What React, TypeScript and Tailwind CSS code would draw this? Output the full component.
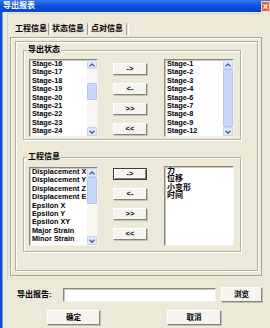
import React from "react";

function Arrow({ up }: { up?: boolean }) {
  return (
    <div className="h-[9px] w-[10px] flex items-center justify-center bg-[#dfe8fb] border border-[#c3d3f5] rounded-[1px]">
      <svg width="6" height="4" viewBox="0 0 6 4">
        {up ? (
          <path d="M0.5 3.5 L3 1 L5.5 3.5" fill="none" stroke="#4d6185" strokeWidth="1.3" />
        ) : (
          <path d="M0.5 0.8 L3 3.3 L5.5 0.8" fill="none" stroke="#4d6185" strokeWidth="1.3" />
        )}
      </svg>
    </div>
  );
}

function ScrollBar({ top, thumb }: { top: number; thumb: number }) {
  return (
    <div className="w-[10px] h-full flex flex-col bg-[#f7f6f1]">
      <Arrow up />
      <div className="flex-1 flex flex-col">
        <div style={{ height: top }} />
        <div
          className="w-[10px] bg-[#c7d7fb] border border-[#b4c7f2] rounded-[1px]"
          style={{ height: thumb }}
        />
      </div>
      <Arrow />
    </div>
  );
}

function ListBox({
  items,
  w,
  h,
  cjk,
  bar,
  className = "",
}: {
  items: string[];
  w: string;
  h: string;
  cjk?: boolean;
  bar?: { top: number; thumb: number };
  className?: string;
}) {
  return (
    <div
      className={`${w} ${h} ${className} bg-white flex border border-t-[#8a887d] border-l-[#8a887d] border-r-[#f4f3ee] border-b-[#f4f3ee] shadow-[inset_1px_1px_0_#c9c6b8]`}
    >
      <div className="flex-1 flex flex-col pl-[2px] overflow-hidden">
        {items.map((t) => (
          <div
            key={t}
            className={
              cjk
                ? "text-[8px] leading-[8.4px] font-bold text-black whitespace-nowrap"
                : "text-[7.3px] leading-[8.4px] font-bold text-black whitespace-nowrap"
            }
          >
            {t}
          </div>
        ))}
      </div>
      {bar && <ScrollBar top={bar.top} thumb={bar.thumb} />}
    </div>
  );
}

function Btn({
  label,
  w,
  h,
  focused,
}: {
  label: string;
  w: string;
  h: string;
  focused?: boolean;
}) {
  return (
    <div
      className={`${w} ${h} flex items-center justify-center bg-[#f5f4ef] text-[7.5px] font-bold text-black leading-none border ${
        focused
          ? "border-[#3c3b36] shadow-[inset_1px_1px_0_#fff,inset_-1px_-1px_0_#85837a]"
          : "border-t-white border-l-white border-r-[#85837a] border-b-[#85837a] shadow-[1px_1px_0_#c3c0b2]"
      }`}
    >
      {label}
    </div>
  );
}

function Buttons({ focusFirst }: { focusFirst?: boolean }) {
  return (
    <div className="flex flex-col gap-[8px]">
      <Btn label="->" w="w-[34px]" h="h-[12px]" focused={focusFirst} />
      <Btn label="<-" w="w-[34px]" h="h-[12px]" />
      <Btn label=">>" w="w-[34px]" h="h-[12px]" />
      <Btn label="<<" w="w-[34px]" h="h-[12px]" />
    </div>
  );
}

function GroupBox({
  title,
  h,
  className = "",
  children,
}: {
  title: string;
  h: string;
  className?: string;
  children: React.ReactNode;
}) {
  return (
    <div
      className={`relative w-[218px] ${h} ${className} border border-[#b7b4a5] shadow-[inset_1px_1px_0_#fff,1px_1px_0_#fff]`}
    >
      <span className="absolute left-[3px] top-[-6px] px-[1px] bg-[#ece9d8] text-[8px] leading-[10px] font-bold text-black">
        {title}
      </span>
      {children}
    </div>
  );
}

export default function App() {
  const left1 = [
    "Stage-16",
    "Stage-17",
    "Stage-18",
    "Stage-19",
    "Stage-20",
    "Stage-21",
    "Stage-22",
    "Stage-23",
    "Stage-24",
  ];
  const right1 = [
    "Stage-1",
    "Stage-2",
    "Stage-3",
    "Stage-4",
    "Stage-6",
    "Stage-7",
    "Stage-8",
    "Stage-9",
    "Stage-12",
  ];
  const left2 = [
    "Displacement X",
    "Displacement Y",
    "Displacement Z",
    "Displacement E",
    "Epsilon X",
    "Epsilon Y",
    "Epsilon XY",
    "Major Strain",
    "Minor Strain",
  ];
  const right2 = ["力", "位移", "小变形", "时间"];

  return (
    <div className="w-[270px] h-[328px] bg-[#ece9d8] flex flex-col overflow-hidden font-['Liberation_Sans','Noto_Sans_CJK_SC',sans-serif]">
      {/* Title bar */}
      <div className="h-[12px] flex items-center bg-gradient-to-b from-[#3a78f0] via-[#0a4fdc] to-[#0846cf]">
        <span className="flex-1 pl-[3px] text-white text-[8px] font-bold leading-none">
          导出报表
        </span>
        <div className="w-[9px] h-[11px] flex items-center justify-center bg-[#e0643c] border border-white/70">
          <svg width="5" height="5" viewBox="0 0 5 5">
            <path d="M0.5 0.5 L4.5 4.5 M4.5 0.5 L0.5 4.5" stroke="#fff" strokeWidth="1.2" />
          </svg>
        </div>
      </div>

      <div className="flex flex-1">
        <div className="w-[2px] bg-[#0b4fd9]" />
        <div className="w-[1px] bg-[#7c9be0]" />
        <div className="flex-1 flex flex-col">
          {/* Tab control */}
          <div className="ml-[4px] mt-[1px] w-[256px] h-[266px] border-l border-t border-[#d6d3c4] pl-[2px] pt-[6px] flex flex-col">
            <div className="h-[17px] flex items-center pl-[5px] text-[8px] font-bold text-black leading-none">
              <span className="w-[33px]">工程信息</span>
              <span className="w-[1px] h-[12px] bg-[#9e9b8e] mr-[1px]" />
              <span className="w-[1px] h-[12px] bg-white mr-[1px]" />
              <span className="w-[35px]">状态信息</span>
              <span className="w-[1px] h-[12px] bg-[#9e9b8e] mr-[1px]" />
              <span className="w-[1px] h-[12px] bg-white mr-[1px]" />
              <span className="w-[35px]">点对信息</span>
              <span className="w-[1px] h-[12px] bg-[#9e9b8e] mr-[1px]" />
              <span className="w-[1px] h-[12px] bg-white" />
            </div>
            <div className="w-[252px] h-[239px] border border-[#a7a498] shadow-[inset_1px_1px_0_#fff] pl-[4px] pt-[3px]">
              <div className="w-[243px] h-[230px] border border-[#b3b0a2] shadow-[inset_1px_1px_0_#fff,1px_1px_0_#fff] pl-[7px] pt-[8px] flex flex-col">
                <GroupBox title="导出状态" h="h-[90px]">
                  <div className="flex pl-[5px] pt-[8px]">
                    <ListBox items={left1} w="w-[69px]" h="h-[78px]" bar={{ top: 14, thumb: 17 }} />
                    <div className="ml-[15px] mt-[4px]">
                      <Buttons />
                    </div>
                    <ListBox
                      items={right1}
                      w="w-[70px]"
                      h="h-[78px]"
                      className="ml-[17px]"
                      bar={{ top: 0, thumb: 58 }}
                    />
                  </div>
                </GroupBox>
                <GroupBox title="工程信息" h="h-[95px]" className="mt-[17px]">
                  <div className="flex pl-[5px] pt-[8px]">
                    <ListBox
                      items={left2}
                      w="w-[69px]"
                      h="h-[79px]"
                      className="mt-[1px]"
                      bar={{ top: 0, thumb: 27 }}
                    />
                    <div className="ml-[15px] mt-[2px]">
                      <Buttons focusFirst />
                    </div>
                    <ListBox items={right2} w="w-[70px]" h="h-[80px]" className="ml-[17px]" cjk />
                  </div>
                </GroupBox>
              </div>
            </div>
          </div>

          {/* Export path row */}
          <div className="mt-[8px] h-[15px] flex items-center pl-[14px]">
            <span className="w-[42px] text-[8px] font-bold text-black leading-none">导出报告:</span>
            <div className="ml-[4px] w-[153px] h-[14px] bg-white border border-t-[#8a887d] border-l-[#8a887d] border-r-[#f4f3ee] border-b-[#f4f3ee] shadow-[inset_1px_1px_0_#c9c6b8]" />
            <div className="ml-[5px]">
              <Btn label="浏览" w="w-[41px]" h="h-[15px]" />
            </div>
          </div>

          {/* OK / Cancel */}
          <div className="mt-[8px] flex pl-[44px]">
            <Btn label="确定" w="w-[53px]" h="h-[15px]" />
            <div className="ml-[67px]">
              <Btn label="取消" w="w-[54px]" h="h-[15px]" />
            </div>
          </div>
        </div>
      </div>
    </div>
  );
}
